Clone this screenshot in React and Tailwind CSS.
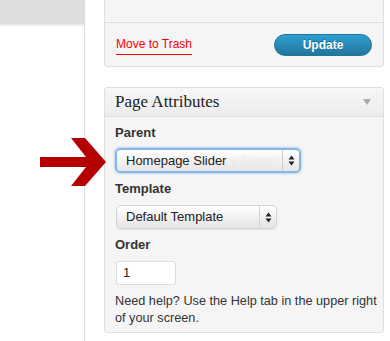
const SelectArrows = () => (
  <svg width="7" height="11" viewBox="0 0 7 11" className="block">
    <path d="M3.5 0.5 L6.5 4.5 H0.5 Z" fill="#222" />
    <path d="M3.5 10.5 L6.5 6.5 H0.5 Z" fill="#222" />
  </svg>
);

const RedArrow = () => (
  <svg width="70" height="50" viewBox="0 0 70 50" className="absolute left-[38px] top-[137px]">
    <rect x="2" y="20" width="52" height="10" fill="#b40000" />
    <polygon points="33,1 47,1 68,25 47,49 33,49 52,25" fill="#b40000" />
  </svg>
);

const App = () => {
  const sans = { fontFamily: '"Liberation Sans", Arial, sans-serif' };

  return (
    <div
      className="relative flex h-[341px] w-[390px] overflow-hidden bg-white text-[#333]"
      style={sans}
    >
      {/* left column */}
      <div className="w-[85px] shrink-0 border-r border-[#dcdcdc]">
        <div className="h-[26px] border-b-2 border-[#ececec] bg-[#dedede]" />
      </div>

      <RedArrow />

      {/* sidebar */}
      <div className="ml-[19px] w-[280px] shrink-0">
        {/* publish box */}
        <div className="-mt-[4px] rounded-b-[3px] border border-[#dfdfdf] bg-[#f5f5f5]">
          <div className="relative h-[26px] border-b border-[#dfdfdf]">
            <span className="absolute left-[122px] top-[0px] h-[2px] w-[2px] bg-[#999]" />
          </div>
          <div className="flex h-[43px] items-center justify-between pl-[11px] pr-[11px]">
            <span className="mt-[2px] border-b border-[#f00] pb-[1px] text-[12px] leading-[17px] text-[#f00]">
              Move to Trash
            </span>
            <button className="flex h-[22px] w-[98px] items-center justify-center rounded-full border border-[#21759b] bg-gradient-to-b from-[#2e9fd2] to-[#21759b] text-[12px] font-bold text-white [text-shadow:0_-1px_0_rgba(0,0,0,0.3)]">
              Update
            </button>
          </div>
        </div>

        {/* page attributes */}
        <div className="mt-[20px] h-[246px] rounded-[3px] border border-[#dfdfdf] bg-[#f5f5f5]">
          <div className="flex h-[29px] items-center justify-between border-b border-[#dfdfdf] bg-gradient-to-b from-[#f7f7f7] to-[#ececec] pl-[10px] pr-[12px]">
            <span
              className="text-[17px] leading-[20px] text-[#222]"
              style={{ fontFamily: '"Liberation Serif", Georgia, serif' }}
            >
              Page Attributes
            </span>
            <svg width="8" height="6" viewBox="0 0 8 6">
              <path d="M0 0 H8 L4 6 Z" fill="#aaa" />
            </svg>
          </div>

          <div className="px-[10px]">
            <div className="mt-[7px] text-[13px] font-bold leading-[17px]">Parent</div>
            <div className="mt-[7px] flex h-[25px] w-[186px] items-stretch rounded-[5px] border-2 border-[#86b6e4] bg-gradient-to-b from-white to-[#e6e6e6] shadow-[0_0_3px_rgba(90,150,220,0.7)]">
              <div className="relative flex flex-1 items-center pl-[9px] text-[13px] text-[#222]">
                Homepage Slider
                <span className="ml-[5px] text-[#ebebeb]">y Boxes</span>
              </div>
              <div className="flex w-[17px] items-center justify-center border-l border-[#cfcfcf]">
                <SelectArrows />
              </div>
            </div>

            <div className="mt-[7px] text-[13px] font-bold leading-[17px]">Template</div>
            <div className="mt-[8px] ml-[1px] flex h-[24px] w-[161px] items-stretch rounded-[5px] border border-[#d4d4d4] bg-gradient-to-b from-white to-[#e4e4e4] shadow-[0_1px_1px_rgba(0,0,0,0.08)]">
              <div className="flex flex-1 items-center pl-[9px] text-[13px] text-[#222]">
                Default Template
              </div>
              <div className="flex w-[17px] items-center justify-center border-l border-[#d4d4d4]">
                <SelectArrows />
              </div>
            </div>

            <div className="mt-[7px] text-[13px] font-bold leading-[17px]">Order</div>
            <div className="mt-[8px] ml-[1px] flex h-[24px] w-[60px] items-center rounded-[3px] border border-[#dcdcdc] bg-white pl-[6px] text-[13px] text-[#222]">
              1
            </div>

            <p className="mt-[8px] -mr-[6px] text-[12.7px] leading-[17px]">
              Need help? Use the Help tab in the upper right of your screen.
            </p>
          </div>
        </div>
      </div>
    </div>
  );
};

export default App;
